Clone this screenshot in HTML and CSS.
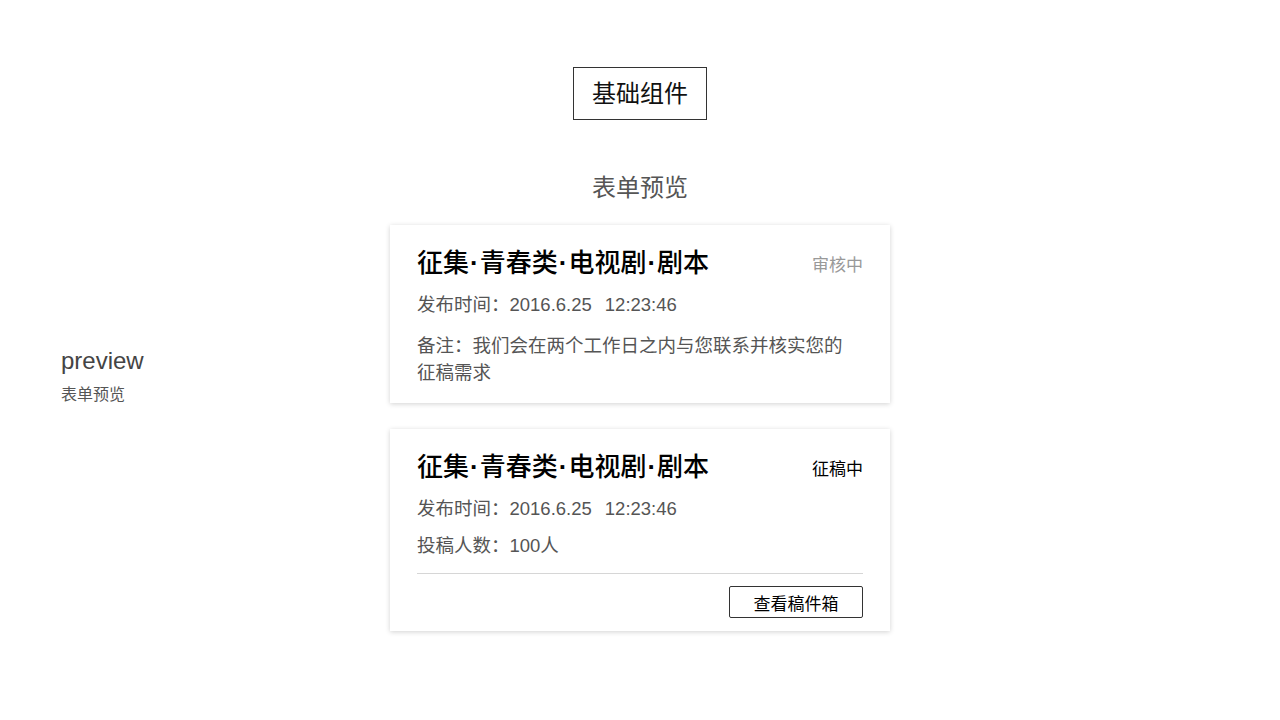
FILE: index.html
```html
<!DOCTYPE html>
<html lang="zh-CN">
<head>
    <meta charset="UTF-8">
    <meta name="viewport" content="width=device-width, initial-scale=1.0">
    <title>基础组件 - 表单预览</title>
    <link rel="stylesheet" href="styles.css">
</head>
<body>
    <!-- Page Header -->
    <header class="page-header">
        <div class="page-title">基础组件</div>
    </header>

    <!-- Preview Section -->
    <main class="preview-layout">
        <aside class="side-label">
            <div class="side-en">preview</div>
            <div class="side-cn">表单预览</div>
        </aside>

        <section class="preview-list">
            <h2 class="section-title">表单预览</h2>

            <div class="form-card">
                <div class="card-head">
                    <div class="card-title">征集<span class="dot">·</span>青春类<span class="dot">·</span>电视剧<span class="dot">·</span>剧本</div>
                    <div class="card-status">审核中</div>
                </div>
                <div class="card-meta">发布时间：2016.6.25<span class="time">12:23:46</span></div>
                <div class="card-note">备注：我们会在两个工作日之内与您联系并核实您的征稿需求</div>
            </div>

            <div class="form-card">
                <div class="card-head">
                    <div class="card-title">征集<span class="dot">·</span>青春类<span class="dot">·</span>电视剧<span class="dot">·</span>剧本</div>
                    <div class="card-status active">征稿中</div>
                </div>
                <div class="card-meta">发布时间：2016.6.25<span class="time">12:23:46</span></div>
                <div class="card-meta count">投稿人数：100人</div>
                <div class="card-foot">
                    <button class="outline-btn">查看稿件箱</button>
                </div>
            </div>
        </section>
    </main>
</body>
</html>
```

FILE: styles.css
```css
/* General body styling */
body {
    font-family: "Liberation Sans", "Noto Sans CJK SC", sans-serif;
    margin: 0;
    padding: 0;
    background-color: #fff;
    color: #333;
}

/* Header */
.page-header {
    display: flex;
    justify-content: center;
    padding-top: 67px;
}

.page-title {
    border: 1px solid #333;
    padding: 0 18px;
    height: 51px;
    line-height: 51px;
    font-size: 24px;
    color: #111;
}

/* Layout */
.preview-layout {
    display: grid;
    grid-template-columns: 390px 500px 1fr;
    padding-top: 52px;
}

.side-label {
    padding-left: 61px;
    padding-top: 173px;
}

.side-en {
    font-size: 24px;
    line-height: 32px;
    color: #444;
}

.side-cn {
    font-size: 16px;
    line-height: 22px;
    margin-top: 7px;
    color: #555;
}

.section-title {
    margin: 0 0 21px;
    text-align: center;
    font-size: 24px;
    line-height: 32px;
    font-weight: normal;
    color: #555;
}

/* Form card */
.form-card {
    background-color: #fff;
    box-shadow: 0 1px 5px rgba(0, 0, 0, 0.18);
    padding: 20px 27px 17px;
    margin-bottom: 26px;
}

.card-head {
    display: flex;
    justify-content: space-between;
    align-items: center;
}

.card-title {
    font-size: 26px;
    line-height: 36px;
    font-weight: 500;
    color: #000;
}

.card-title .dot {
    font-weight: bold;
    margin: 0 1px;
}

.card-status {
    font-size: 17px;
    color: #999;
}

.card-status.active {
    color: #000;
}

.card-meta {
    margin-top: 10px;
    font-size: 18.5px;
    line-height: 27px;
    color: #555;
}

.card-meta .time {
    margin-left: 13px;
}

.card-note {
    margin-top: 14px;
    font-size: 18.5px;
    line-height: 27px;
    color: #555;
    max-width: 436px;
}

.card-foot {
    margin-top: 14px;
    border-top: 1px solid #d6d6d6;
    padding-top: 12px;
    display: flex;
    justify-content: flex-end;
    margin-bottom: -4px;
}

.outline-btn {
    font-family: inherit;
    font-size: 17px;
    width: 134px;
    height: 32px;
    background-color: #fff;
    border: 1px solid #333;
    border-radius: 2px;
    color: #000;
    padding: 0;
}
```
